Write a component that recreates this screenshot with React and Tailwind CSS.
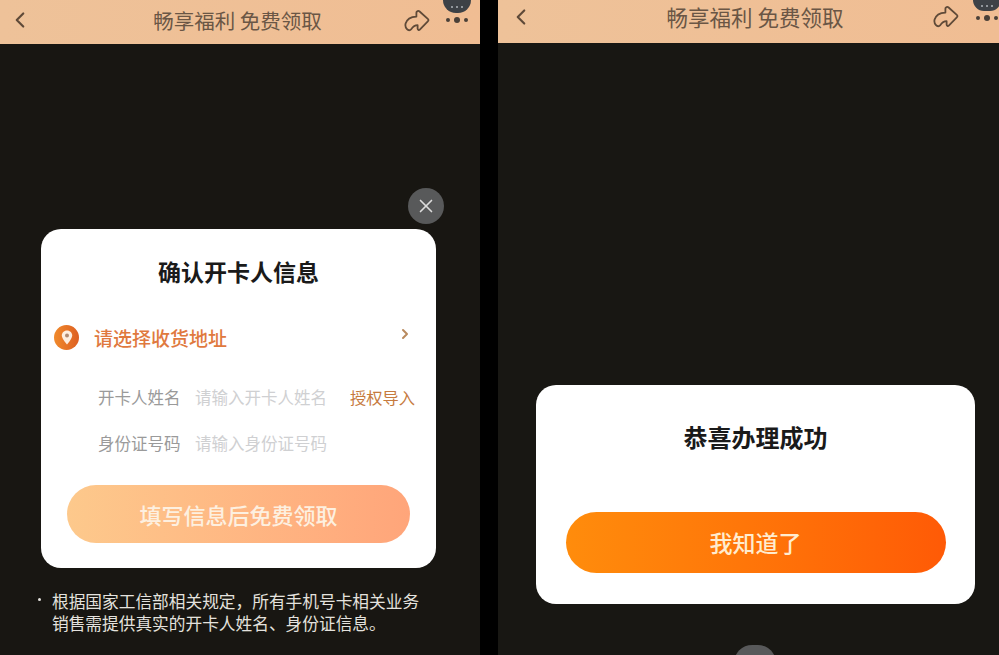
import { ChevronLeft, ChevronRight, X } from 'lucide-react';

const FONT = 'font-["Noto_Sans_CJK_SC","Liberation_Sans",sans-serif]';

const ShareIcon = () => (
  <svg width="26" height="24" viewBox="0 0 26 24" fill="none" stroke="#5f4a38" strokeWidth="1.800" strokeLinejoin="round" strokeLinecap="round">
    <path d="M13 2.500C13.800 1.800 14.800 1.800 15.600 2.500L23.800 9.800C24.700 10.600 24.700 11.600 23.800 12.400L15.800 20.600C14.900 21.400 13.600 20.800 13.600 19.600V16.200C10.800 16.200 9 17.600 7.200 20.200C6.200 21.600 4.200 21.600 3 20.200C1.600 18.600 1 16.800 1.600 14.600C2.800 10.400 7.200 7.800 12.400 7.600V3.800C12.400 3.300 12.600 2.800 13 2.500Z" />
  </svg>
);

const MoreDots = ({ pillClass }) => (
  <div className="absolute right-0 top-0 flex w-[30px] flex-col items-center">
    <div className={`flex w-[28px] items-center justify-center gap-[3px] rounded-b-[13px] bg-[#3d4146] ${pillClass}`}>
      <span className="h-[2px] w-[2px] rounded-full bg-[#aeb3b8]" />
      <span className="h-[2px] w-[2px] rounded-full bg-[#aeb3b8]" />
      <span className="h-[2px] w-[2px] rounded-full bg-[#aeb3b8]" />
    </div>
    <div className="mt-[4px] flex items-center gap-[4px]">
      <span className="h-[4px] w-[4px] rounded-full bg-[#4a4038]" />
      <span className="h-[6px] w-[6px] rounded-full bg-[#4a4038]" />
      <span className="h-[4px] w-[4px] rounded-full bg-[#4a4038]" />
    </div>
  </div>
);

const Header = ({ h, titleClass, backClass, shareClass, dotsClass, pillClass }) => (
  <header className={`relative flex shrink-0 items-center overflow-hidden bg-gradient-to-r from-[#eec299] to-[#f0bd93] ${h}`}>
    <ChevronLeft size={26} strokeWidth={2} className={`shrink-0 text-[#5f4a38] ${backClass}`} />
    <div className={`flex-1 whitespace-nowrap text-center leading-none text-[#6a5645] ${titleClass}`}>畅享福利 免费领取</div>
    <div className={shareClass}><ShareIcon /></div>
    <div className={`absolute top-0 h-full w-[30px] ${dotsClass}`}><MoreDots pillClass={pillClass} /></div>
  </header>
);

const Field = ({ label, placeholder, action }) => (
  <div className="flex h-[22px] items-center text-[16.500px] leading-none">
    <span className="w-[84px] shrink-0 whitespace-nowrap text-[#9a9a9a]">{label}</span>
    <span className="ml-[13px] w-[155px] shrink-0 whitespace-nowrap text-[#cfd0d2]">{placeholder}</span>
    {action && <span className="whitespace-nowrap text-[16.300px] text-[#c67a3e]">{action}</span>}
  </div>
);

const FormCard = () => (
  <div className="flex h-[339px] flex-col rounded-[20px] bg-white">
    <h2 className="mt-[28px] text-center text-[23px] font-bold leading-[28px] text-[#1a1a1a]">确认开卡人信息</h2>
    <div className="mt-[39px] flex h-[26px] items-center pl-[13px] pr-[23px]">
      <span className="flex h-[25px] w-[25px] items-center justify-center rounded-full bg-gradient-to-r from-[#f08a2c] to-[#dd5f22]">
        <svg width="12" height="15" viewBox="0 0 12 15">
          <path d="M6 .5C2.800.5.800 2.900.800 5.600.800 9 6 14.500 6 14.500S11.200 9 11.200 5.600C11.200 2.900 9.200.5 6 .5Z" fill="#fdeee0" />
          <circle cx="6" cy="5.600" r="2" fill="#b08a72" />
        </svg>
      </span>
      <span className="ml-[15px] flex-1 text-[19px] font-medium leading-none text-[#e0793e]">请选择收货地址</span>
      <ChevronRight size={16} strokeWidth={3} className="-mt-[6px] text-[#b98a5e]" />
    </div>
    <div className="mt-[36px] flex flex-col gap-[24px] pl-[57px]">
      <Field label="开卡人姓名" placeholder="请输入开卡人姓名" action="授权导入" />
      <Field label="身份证号码" placeholder="请输入身份证号码" />
    </div>
    <button className="mx-auto mt-[31px] h-[58px] w-[343px] rounded-full bg-gradient-to-r from-[#fdc98c] to-[#ffa57a] text-[22px] font-medium text-[#fdf0e0]">
      填写信息后免费领取
    </button>
  </div>
);

const LeftPhone = () => (
  <section className="flex h-full w-[480px] shrink-0 flex-col overflow-hidden bg-[#181612]">
    <Header h="h-[44px] pb-[4px]" backClass="ml-[7px]" titleClass="ml-[38px] text-[20.500px]" shareClass="mr-[50px] mt-[2px]" dotsClass="right-[8px]" pillClass="h-[13px]" />
    <div className="flex flex-1 flex-col pl-[41px] pr-[44px] pt-[144px]">
      <button className="-mr-[8px] flex h-[36px] w-[36px] items-center justify-center self-end rounded-full bg-[#58595a]">
        <X size={22} strokeWidth={1.800} className="text-[#dcdcdc]" />
      </button>
      <div className="mt-[5px]"><FormCard /></div>
      <div className="-ml-[3px] -mr-[8px] mt-[22px] flex text-[16.700px] leading-[22px] text-[#e4e2de]">
        <span className="mr-[11px] mt-[8px] h-[3px] w-[3px] shrink-0 rounded-full bg-[#e4e2de]" />
        <p className="whitespace-nowrap">根据国家工信部相关规定，所有手机号卡相关业务<br />销售需提供真实的开卡人姓名、身份证信息。</p>
      </div>
    </div>
  </section>
);

const RightPhone = () => (
  <section className="relative flex h-full flex-1 flex-col overflow-hidden bg-[#181713]">
    <Header h="h-[43px] pb-[10px]" backClass="ml-[10px]" titleClass="ml-[43px] text-[21.500px]" shareClass="mr-[40px]" dotsClass="-right-[3px]" pillClass="h-[11px]" />
    <div className="flex flex-1 flex-col pl-[38px] pr-[24px] pt-[342px]">
      <div className="flex h-[219px] flex-col rounded-[20px] bg-white">
        <h2 className="mt-[38px] text-center text-[24px] font-bold leading-[28px] text-[#1a1a1a]">恭喜办理成功</h2>
        <button className="mx-auto mt-[61px] h-[61px] w-[380px] rounded-full bg-gradient-to-r from-[#ff8c0c] to-[#ff5a06] text-[23px] font-medium text-[#ffeccf]">
          我知道了
        </button>
      </div>
    </div>
    <div className="absolute bottom-[-26px] left-[236px] h-[36px] w-[42px] rounded-full bg-[#58595a]" />
  </section>
);

export default function App() {
  return (
    <div className={`flex h-[655px] w-[999px] overflow-hidden bg-black ${FONT}`}>
      <LeftPhone />
      <div className="w-[18px] shrink-0 bg-black" />
      <RightPhone />
    </div>
  );
}
